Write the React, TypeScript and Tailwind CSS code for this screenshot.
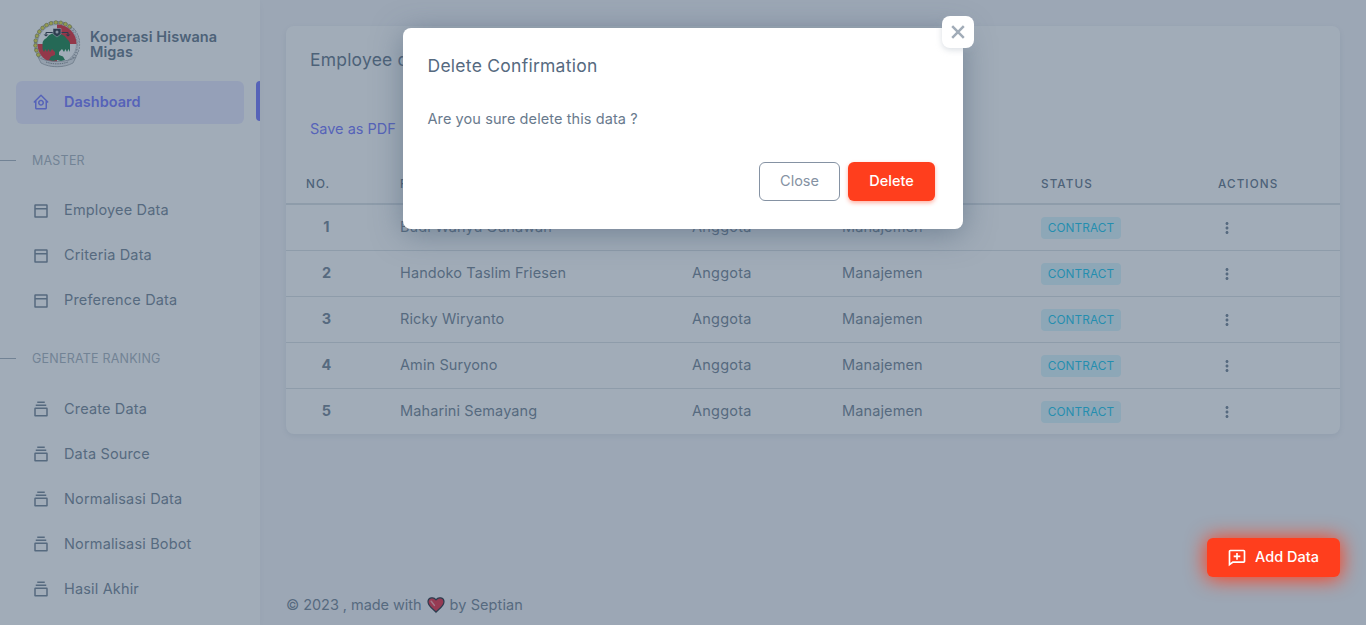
import React from "react";
import { BiHomeCircle, BiDotsVerticalRounded } from "react-icons/bi";

const master = ["Employee Data", "Criteria Data", "Preference Data"];
const ranking = ["Create Data", "Data Source", "Normalisasi Data", "Normalisasi Bobot", "Hasil Akhir"];
const employees = ["Budi Wahyu Gunawan", "Handoko Taslim Friesen", "Ricky Wiryanto", "Amin Suryono", "Maharini Semayang"];
const columns = "grid grid-cols-[114px_292px_150px_199px_177px_122px]";

function WindowIcon() {
  return (
    <svg className="mt-px" width="18" height="18" viewBox="0 0 24 24" fill="currentColor">
      <path d="M19.500 3h-15C3.700 3 3 3.700 3 4.500v15c0 .8.7 1.500 1.500 1.500h15c.8 0 1.500-.7 1.500-1.500v-15c0-.8-.7-1.500-1.500-1.500zm-.5 2v3H5V5h14zM5 19v-9h14v9H5z" />
    </svg>
  );
}

function CollectionIcon() {
  return (
    <svg width="18" height="18" viewBox="0 0 24 24" fill="currentColor">
      <path d="M19.500 10h-15C3.700 10 3 10.700 3 11.500v9c0 .8.7 1.500 1.500 1.500h15c.8 0 1.500-.7 1.500-1.500v-9c0-.8-.7-1.500-1.500-1.500zM5 20v-8h14v8H5zM5 6h14v2H5zM7 2h10v2H7z" />
    </svg>
  );
}

function MessageAddIcon() {
  return (
    <svg width="20" height="20" viewBox="0 0 24 24" fill="currentColor">
      <path d="M20 2H4c-1.103 0-2 .897-2 2v18l5.333-4H20c1.103 0 2-.897 2-2V4c0-1.103-.897-2-2-2zm0 14H6.667L4 18V4h16v12z" />
      <path d="M11 14h2v-3h3V9h-3V6h-2v3H8v2h3z" />
    </svg>
  );
}

function Logo() {
  const teeth = Array.from({ length: 13 }, (_, i) => {
    const a = ((150 + i * 13) * Math.PI) / 180;
    return <circle key={i} cx={24 + 21.5 * Math.cos(a)} cy={24 + 21.5 * Math.sin(a)} r="1.9" fill="#e3dc2f" stroke="#77752e" strokeWidth=".6" />;
  });
  return (
    <svg className="h-12 w-12 shrink-0" viewBox="0 0 48 48">
      <circle cx="24" cy="24" r="21.5" fill="none" stroke="#8a8f97" strokeWidth="3.2" strokeDasharray="2 .8" />
      <circle cx="24" cy="24" r="21.5" fill="none" stroke="#e6e8ea" strokeWidth="2" strokeDasharray="2 1" />
      {teeth}
      <circle cx="24" cy="24" r="19.500" fill="#fff" stroke="#a0a5ab" strokeWidth=".6" />
      <path d="M24 24V4.500A19.500 19.500 0 0 1 43.500 24zM24 24H4.500A19.500 19.500 0 0 0 24 43.500z" fill="#e21622" />
      <path d="M24 14c6 0 8 2 10 5 2 2 3 3 3 5v8l-1.500-3-1.500 3-1.500-3-1.500 3-2-3-3 3v3l4 1.500 2 3.500-4 1-4-1-4 1-4-1 2-3.500 4-1.500v-3l-3-3-2 3-1.500-3-1.500 3-1.500-3-1.500 3-1.500-3v-5c0-3 1-4 4-6 2-3 5-5 10-5z" fill="#07783b" />
      <path d="M13 12.500h22M13 12.500v2m22-2v2" fill="none" stroke="#17202c" strokeWidth="1.200" />
      <path d="M10.500 14.500h5l-2.500 2zM32.500 14.500h5l-2.500 2z" fill="#17202c" />
      <path d="M20 8.500h8V14l-4 3-4-3z" fill="#17202c" stroke="#fff" strokeWidth=".5" />
      <circle cx="24" cy="12" r="1.500" fill="#c9ccd0" />
      <path d="M5 37c9 6 29 6 38 0l-3 6c-9 5-23 5-32 0z" fill="#e4e6e8" stroke="#8b9097" strokeWidth=".7" />
      <path d="M13 42c7 2.500 15 2.500 22 0" fill="none" stroke="#7e848b" strokeDasharray="1.500 .8" />
    </svg>
  );
}

function MenuItem({ label, icon }: { label: string; icon: React.ReactNode }) {
  return (
    <div className="flex h-[45px] items-center gap-[14px] pl-8 text-[14.5px] tracking-[0.16px] text-[#697a8d]">
      <span className="pt-px">{icon}</span>
      <span>{label}</span>
    </div>
  );
}

function MenuHeader({ label }: { label: string }) {
  return (
    <div className="flex h-[18px] items-center gap-4 text-[12.500px] tracking-[0.22px] text-[#a1acb8]">
      <span className="h-px w-4 bg-[#a1acb8]" />
      <span className="pt-[3px]">{label}</span>
    </div>
  );
}

export default function App() {
  return (
    <div className="relative h-[625px] w-[1366px] overflow-hidden bg-[#f5f5f9] font-['Inter',sans-serif] text-[14.5px] text-[#697a8d]">
      <div className="flex h-full">
        <aside className="flex w-[260px] shrink-0 flex-col bg-white shadow-[0_2px_6px_rgba(161,172,184,0.12)]">
          <div className="flex h-[81px] items-center gap-[9px] pl-[33px] pt-[7px]">
            <Logo />
            <div className="text-[14.500px] font-semibold leading-[15px] tracking-[0.1px] text-[#566a7f]">
              Koperasi Hiswana
              <br />
              Migas
            </div>
          </div>
          <div className="flex justify-between pl-4">
            <div className="flex h-[43px] w-[228px] items-center gap-[14px] rounded-md bg-[#696cff]/[0.16] pb-px pl-4 font-semibold text-[#696cff]">
              <BiHomeCircle size={18} />
              Dashboard
            </div>
            <div className="h-10 w-1 rounded-l bg-[#696cff]" />
          </div>
          <div className="mt-[27px]"><MenuHeader label="MASTER" /></div>
          <nav className="mt-[18px]">
            {master.map((m) => <MenuItem key={m} label={m} icon={<WindowIcon />} />)}
          </nav>
          <div className="mt-[27px]"><MenuHeader label="GENERATE RANKING" /></div>
          <nav className="mt-[19px]">
            {ranking.map((m) => <MenuItem key={m} label={m} icon={<CollectionIcon />} />)}
          </nav>
        </aside>

        <main className="flex flex-1 flex-col px-[26px] pt-[26px]">
          <section className="h-[408px] overflow-hidden rounded-lg bg-white shadow-[0_2px_6px_rgba(67,89,113,0.12)]">
            <h5 className="px-6 pt-[22px] text-[17.500px] font-normal leading-6 tracking-[0.2px] text-[#566a7f]">Employee data</h5>
            <div className="px-6 pt-[46px] leading-[22px] text-[#696cff]">Save as PDF</div>
            <div className={columns + " mt-[23px] h-[42px] items-center border-b-2 border-[#d9dee3] pt-[3px] text-[11.700px] font-medium tracking-[1.1px] text-[#566a7f]"}>
              <span className="pl-5">NO.</span>
              <span>FULL NAME</span>
              <span />
              <span />
              <span>STATUS</span>
              <span>ACTIONS</span>
            </div>
            {employees.map((name, i) => (
              <div key={name} className={columns + " h-[46px] items-center border-b border-[#d9dee3] pb-px tracking-[0.11px]"}>
                <span className="w-[81px] text-center font-bold">{i + 1}</span>
                <span>{name}</span>
                <span className="tracking-[0.25px]">Anggota</span>
                <span className="tracking-[0.12px]">Manajemen</span>
                <span className="mt-px flex h-[22px] w-20 items-center justify-center rounded bg-[#d7f5fc] pt-0.5 text-[11.800px] font-normal tracking-[0.1px] text-[#03c3ec]">CONTRACT</span>
                <BiDotsVerticalRounded size={18} className="mt-px" />
              </div>
            ))}
          </section>
          <footer className="mt-[160px] flex h-[22px] items-center">
            <span className="tracking-[-0.05px]">© 2023 , made with</span>
            <svg className="mx-[5px] h-[18px] w-[18px]" viewBox="0 0 18 18">
              <path d="M9 16.200C6.500 13 1 10.300 1 5.700 1 1.500 6.700.5 9 3.800c2.300-3.300 8-2.300 8 1.900 0 4.600-5.500 7.300-8 10.500z" fill="#e81c35" stroke="#17202c" strokeWidth="1.200" />
              <path d="M4.200 5.200l3.200 4.200" stroke="#ff9ba3" strokeWidth="1.500" strokeLinecap="round" />
            </svg>
            <span className="tracking-[0.1px]">by Septian</span>
          </footer>
        </main>
      </div>

      <div className="absolute inset-0 bg-[#435971]/50" />

      <div className="absolute left-[403px] top-[28px] flex h-[201px] w-[560px] flex-col rounded-lg bg-white px-[24.500px] pt-[26px] shadow-[0_5px_30px_rgba(67,89,113,0.5)]">
        <h5 className="text-[17.500px] font-normal leading-6 tracking-[0.26px] text-[#566a7f]">Delete Confirmation</h5>
        <p className="mt-[30px] leading-[22px] tracking-[0.09px]">Are you sure delete this data ?</p>
        <div className="mt-8 flex justify-end gap-2 pr-[3.500px]">
          <button className="h-[39px] w-[81px] rounded-md border border-[#8592a3] pb-0.5 text-[#8592a3]">Close</button>
          <button className="h-[39px] w-[87px] rounded-md bg-[#ff3e1d] pb-0.5 font-medium text-white shadow-[0_2px_4px_rgba(255,62,29,0.4)]">Delete</button>
        </div>
        <button className="absolute -right-[11px] -top-3 flex h-8 w-8 items-center justify-center rounded-lg bg-white shadow-[0_2px_6px_rgba(161,172,184,0.4)]">
          <svg width="14" height="14" viewBox="0 0 14 14" fill="none" stroke="#a1acb8" strokeWidth="2.500">
            <path d="M1.200 1.200l11.600 11.600m0-11.600L1.200 12.800" />
          </svg>
        </button>
      </div>

      <button className="absolute left-[1207px] top-[538px] flex h-[39px] w-[133px] items-center gap-2 rounded-md bg-[#ff3e1d] pl-5 font-medium text-white shadow-[0_1px_20px_1px_#ff3e1d]">
        <span className="pt-px"><MessageAddIcon /></span>
        <span className="pb-0.5">Add Data</span>
      </button>
    </div>
  );
}
